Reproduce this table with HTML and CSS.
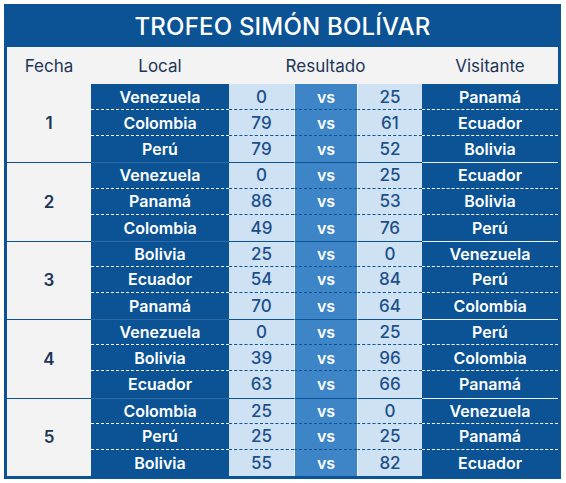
FILE: index.html
```html
<!DOCTYPE html>
<html lang="es">
<head>
<meta charset="utf-8">
<title>Trofeo Simón Bolívar</title>
<link rel="stylesheet" href="styles.css">
</head>
<body>
<div class="board">
  <div class="title">TROFEO SIMÓN BOLÍVAR</div>
  <div class="table">
    <div class="head">
      <div>Fecha</div><div>Local</div><div class="res">Resultado</div><div>Visitante</div>
    </div>
    <div class="group">
      <div class="fecha">1</div>
      <div class="c local">Venezuela</div><div class="c s">0</div><div class="c vs">vs</div><div class="c s s2">25</div><div class="c vis">Panamá</div>
      <div class="c local">Colombia</div><div class="c s">79</div><div class="c vs">vs</div><div class="c s s2">61</div><div class="c vis">Ecuador</div>
      <div class="c local">Perú</div><div class="c s">79</div><div class="c vs">vs</div><div class="c s s2">52</div><div class="c vis">Bolivia</div>
    </div>
    <div class="group">
      <div class="fecha">2</div>
      <div class="c local">Venezuela</div><div class="c s">0</div><div class="c vs">vs</div><div class="c s s2">25</div><div class="c vis">Ecuador</div>
      <div class="c local">Panamá</div><div class="c s">86</div><div class="c vs">vs</div><div class="c s s2">53</div><div class="c vis">Bolivia</div>
      <div class="c local">Colombia</div><div class="c s">49</div><div class="c vs">vs</div><div class="c s s2">76</div><div class="c vis">Perú</div>
    </div>
    <div class="group">
      <div class="fecha">3</div>
      <div class="c local">Bolivia</div><div class="c s">25</div><div class="c vs">vs</div><div class="c s s2">0</div><div class="c vis">Venezuela</div>
      <div class="c local">Ecuador</div><div class="c s">54</div><div class="c vs">vs</div><div class="c s s2">84</div><div class="c vis">Perú</div>
      <div class="c local">Panamá</div><div class="c s">70</div><div class="c vs">vs</div><div class="c s s2">64</div><div class="c vis">Colombia</div>
    </div>
    <div class="group">
      <div class="fecha">4</div>
      <div class="c local">Venezuela</div><div class="c s">0</div><div class="c vs">vs</div><div class="c s s2">25</div><div class="c vis">Perú</div>
      <div class="c local">Bolivia</div><div class="c s">39</div><div class="c vs">vs</div><div class="c s s2">96</div><div class="c vis">Colombia</div>
      <div class="c local">Ecuador</div><div class="c s">63</div><div class="c vs">vs</div><div class="c s s2">66</div><div class="c vis">Panamá</div>
    </div>
    <div class="group">
      <div class="fecha">5</div>
      <div class="c local">Colombia</div><div class="c s">25</div><div class="c vs">vs</div><div class="c s s2">0</div><div class="c vis">Venezuela</div>
      <div class="c local">Perú</div><div class="c s">25</div><div class="c vs">vs</div><div class="c s s2">25</div><div class="c vis">Panamá</div>
      <div class="c local">Bolivia</div><div class="c s">55</div><div class="c vs">vs</div><div class="c s s2">82</div><div class="c vis">Ecuador</div>
    </div>
  </div>
</div>
</body>
</html>
```
FILE: styles.css
```css
* { box-sizing: border-box; }
body {
  margin: 0;
  background: #ffffff;
  font-family: "Inter", "Noto Sans", "DejaVu Sans", sans-serif;
}
.board {
  margin: 4px 0 0 4px;
  width: 557px;
  height: 475px;
  background: #0b5394;
  padding: 0 3px 3px 3px;
  display: flex;
  flex-direction: column;
}
.title {
  height: 43px;
  display: flex;
  align-items: center;
  justify-content: center;
  color: #ffffff;
  font-size: 24px;
  font-weight: 500;
  letter-spacing: 0.2px;
  padding-top: 2px;
}
.table {
  display: flex;
  flex-direction: column;
}
.head {
  height: 37px;
  background: #f3f3f3;
  display: grid;
  grid-template-columns: 84px 138px 193px 136px;
  align-items: center;
  text-align: center;
  color: #1c3657;
  font-size: 17px;
}
.group {
  height: 78.4px;
  display: grid;
  grid-template-columns: 84px 138px 65px 63px 65px 136px;
  grid-template-rows: repeat(3, 1fr);
}
.fecha {
  grid-row: 1 / 4;
  background: #f3f3f3;
  display: flex;
  align-items: center;
  justify-content: center;
  color: #1c3657;
  font-size: 17px;
  font-weight: 600;
}
.c {
  display: flex;
  align-items: center;
  justify-content: center;
  font-size: 16px;
  border-bottom: 1px dashed #0b5394;
}
.local, .vis {
  background: #0b5394;
  color: #ffffff;
  font-weight: 600;
  border-bottom-color: #ffffff;
}
.s {
  background: #cfe2f3;
  color: #1b4f8a;
  font-weight: 500;
  font-size: 17px;
}
.s2 { border-left: 1px solid #e9f1f9; }
.vs {
  background: #3d85c6;
  color: #ffffff;
  font-weight: 600;
  border-left: 1px solid #e9f1f9;
}
.group .c:nth-child(n+12) { border-bottom: none; }
.group + .group .fecha { border-top: 1px solid #0b5394; }
.group + .group .c:nth-child(-n+6) { border-top: 1px solid #0b5394; }
.group + .group .local:nth-child(2) { border-top-color: #2e6aa6; }
.group + .group .vis:nth-child(6) { border-top-color: #e9f1f9; }
```
